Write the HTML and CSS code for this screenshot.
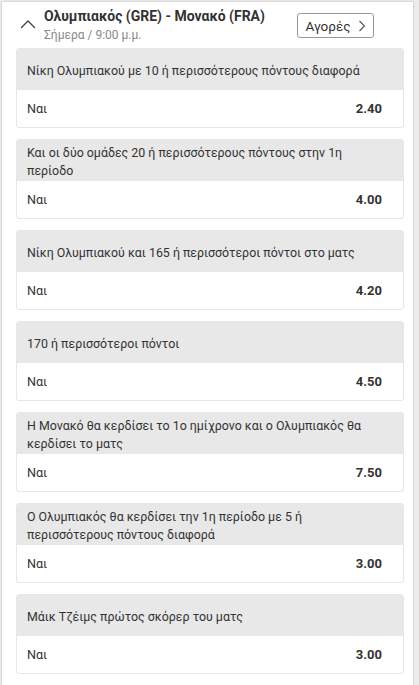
FILE: index.html
```html
<!DOCTYPE html>
<html lang="el">
<head>
<meta charset="utf-8">
<link rel="stylesheet" href="styles.css">
</head>
<body>
<div class="panel">
  <div class="event-head">
    <svg class="chev" width="16" height="10" viewBox="0 0 16 10"><path d="M1 9 L8 2 L15 9" fill="none" stroke="#444" stroke-width="1.3"/></svg>
    <div class="event-info">
      <div class="event-title">Ολυμπιακός (GRE) - Μονακό (FRA)</div>
      <div class="event-time">Σήμερα / 9:00 μ.μ.</div>
    </div>
    <div class="markets-btn">Αγορές <svg width="8" height="12" viewBox="0 0 8 12"><path d="M1.5 1 L6.5 6 L1.5 11" fill="none" stroke="#555" stroke-width="1.1"/></svg></div>
  </div>
  <div class="cards">
    <div class="card"><div class="card-head">Νίκη Ολυμπιακού με 10 ή περισσότερους πόντους διαφορά</div><div class="card-row"><span>Ναι</span><b>2.40</b></div></div>
    <div class="card"><div class="card-head">Και οι δύο ομάδες 20 ή περισσότερους πόντους στην 1η περίοδο</div><div class="card-row"><span>Ναι</span><b>4.00</b></div></div>
    <div class="card"><div class="card-head">Νίκη Ολυμπιακού και 165 ή περισσότεροι πόντοι στο ματς</div><div class="card-row"><span>Ναι</span><b>4.20</b></div></div>
    <div class="card"><div class="card-head">170 ή περισσότεροι πόντοι</div><div class="card-row"><span>Ναι</span><b>4.50</b></div></div>
    <div class="card"><div class="card-head">Η Μονακό θα κερδίσει το 1ο ημίχρονο και ο Ολυμπιακός θα κερδίσει το ματς</div><div class="card-row"><span>Ναι</span><b>7.50</b></div></div>
    <div class="card"><div class="card-head">Ο Ολυμπιακός θα κερδίσει την 1η περίοδο με 5 ή περισσότερους πόντους διαφορά</div><div class="card-row"><span>Ναι</span><b>3.00</b></div></div>
    <div class="card"><div class="card-head">Μάικ Τζέιμς πρώτος σκόρερ του ματς</div><div class="card-row"><span>Ναι</span><b>3.00</b></div></div>
  </div>
</div>
</body>
</html>
```
FILE: styles.css
```css
html, body {
  margin: 0;
  padding: 0;
  background: #ececec;
  font-family: Roboto, "Noto Sans", sans-serif;
  color: #333;
}
.panel {
  margin: 2px 6px 0 2px;
  background: #fff;
  box-shadow: 0 0 2px rgba(0,0,0,0.25);
  padding: 0 9px 12px 14px;
  min-height: 700px;
}
.event-head {
  display: flex;
  align-items: flex-start;
  height: 46px;
}
.chev {
  margin: 17px 0 0 4px;
}
.event-info {
  margin-left: 8px;
  padding-top: 6px;
  flex: 1;
}
.event-title {
  font-weight: bold;
  font-size: 14px;
  line-height: 17px;
  color: #333;
}
.event-time {
  font-size: 12px;
  color: #888;
  line-height: 14px;
  margin-top: 3px;
}
.markets-btn {
  margin: 11px 30px 0 0;
  height: 25px;
  width: 77px;
  box-sizing: border-box;
  border: 1px solid #999;
  border-radius: 3px;
  font-size: 13.5px;
  color: #333;
  display: flex;
  align-items: center;
  justify-content: center;
  gap: 7px;
}
.cards {
  display: flex;
  flex-direction: column;
  gap: 11px;
}
.card {
  border: 1px solid #e6e6e6;
  border-radius: 3px;
  overflow: hidden;
}
.card-head {
  background: #e8e8e8;
  min-height: 41px;
  box-sizing: border-box;
  padding: 4px 20px 1px 10px;
  display: flex;
  align-items: center;
  font-size: 12.4px;
  line-height: 18px;
}
.card-row {
  height: 37px;
  display: flex;
  align-items: center;
  justify-content: space-between;
  padding: 0 21px 0 10px;
  font-size: 12.6px;
}
.card-row b {
  font-weight: bold;
  font-size: 13px;
}
```
